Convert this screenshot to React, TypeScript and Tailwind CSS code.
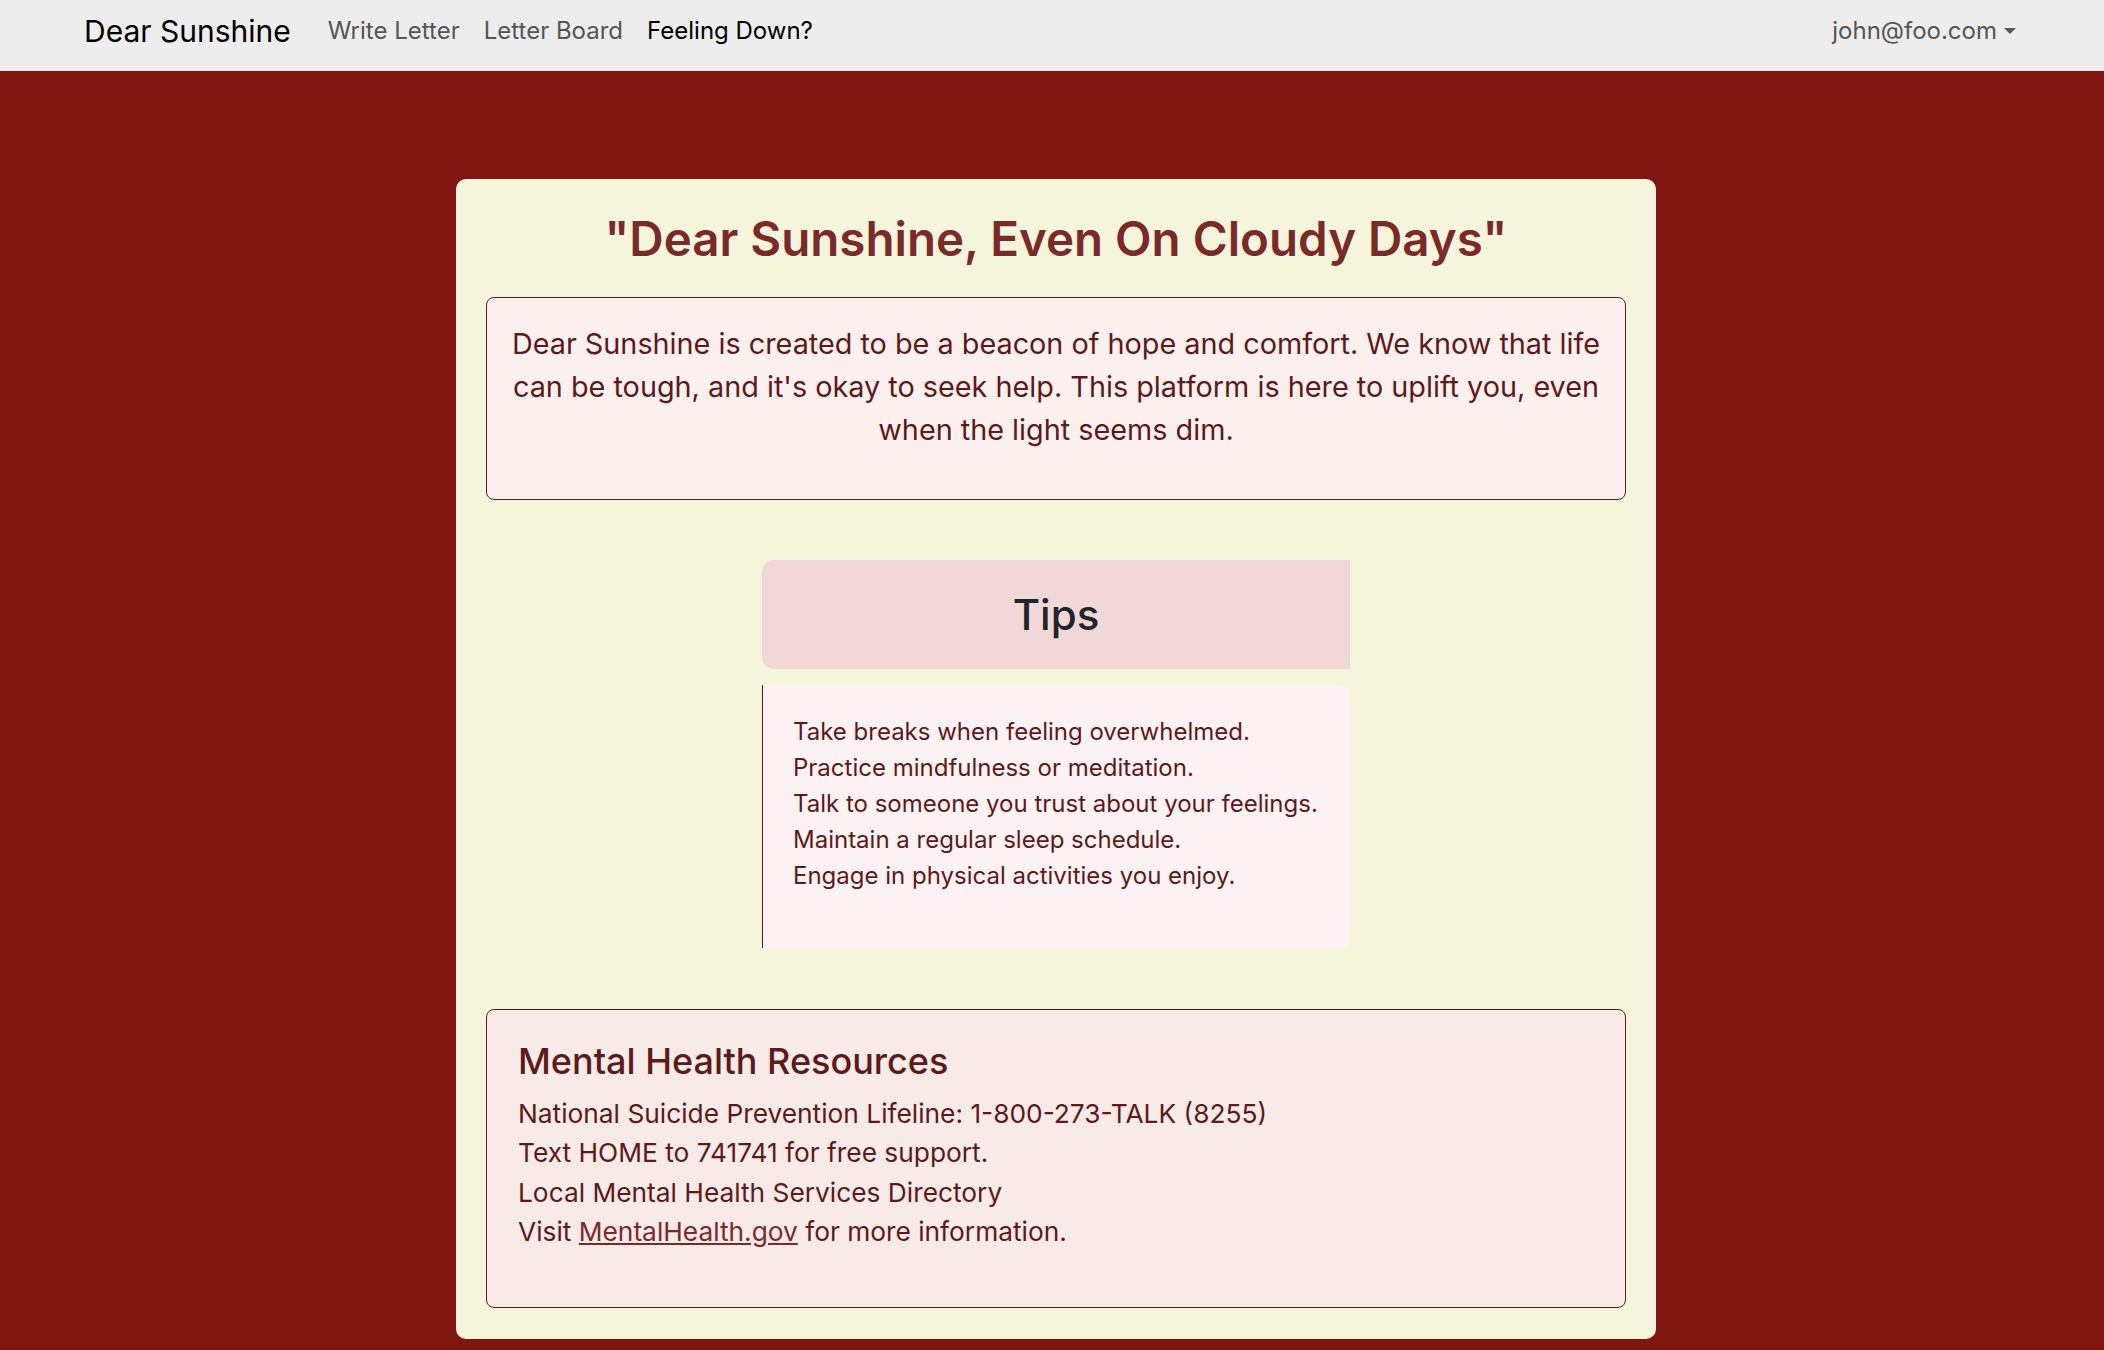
import React from "react";

export default function App() {
  const tips = [
    "Take breaks when feeling overwhelmed.",
    "Practice mindfulness or meditation.",
    "Talk to someone you trust about your feelings.",
    "Maintain a regular sleep schedule.",
    "Engage in physical activities you enjoy.",
  ];
  return (
    <div
      className="min-h-screen bg-[#7f1710]"
      style={{ fontFamily: "Inter, 'Noto Sans', sans-serif" }}
    >
      <nav className="h-[71px] bg-[#ededed] flex items-center justify-between px-[84px] pb-[10px]">
        <div className="flex items-center">
          <span className="text-[30px] text-black mr-[37px] leading-none">Dear Sunshine</span>
          <div className="flex items-center gap-[24px] text-[24px] leading-none">
            <span className="text-[#555555]">Write Letter</span>
            <span className="text-[#555555]">Letter Board</span>
            <span className="text-black">Feeling Down?</span>
          </div>
        </div>
        <div className="flex items-center text-[24px] text-[#555555] leading-none mr-[4px]">
          <span>john@foo.com</span>
          <span className="ml-[7px] w-0 h-0 border-l-[6px] border-r-[6px] border-t-[6px] border-l-transparent border-r-transparent border-t-[#555555]"></span>
        </div>
      </nav>

      <main className="flex justify-center pt-[108px] pb-[12px] pl-[8px]">
        <div className="w-[1200px] bg-[#f5f5dc] rounded-[10px] px-[30px] pt-[31px] pb-[31px]">
          <h1 className="text-center text-[47.5px] leading-[1.2] font-semibold text-[#7b2a2a] mb-[30px]">
            "Dear Sunshine, Even On Cloudy Days"
          </h1>

          <div className="border border-[#5c1a1a] rounded-[8px] bg-[#fcf0ee] px-[20px] pt-[24px] pb-[48px]">
            <p className="text-center text-[28.8px] leading-[43px] text-[#5c1a1a]">
              Dear Sunshine is created to be a beacon of hope and comfort. We know that life can be tough, and it's okay to seek help. This platform is here to uplift you, even when the light seems dim.
            </p>
          </div>

          <div className="w-[588px] mx-auto mt-[60px]">
            <div className="h-[109px] bg-[#f2d7d9] rounded-l-[12px] flex items-center justify-center">
              <h2 className="text-[42px] font-medium text-[#212529] leading-none">Tips</h2>
            </div>
            <div className="mt-[16px] h-[263px] bg-[#fdf2f3] border-l border-[#5c1a1a] rounded-r-[10px] pl-[30px] pt-[29px]">
              {tips.map((t) => (
                <div key={t} className="text-[24px] leading-[36px] text-[#5c1a1a]">
                  {t}
                </div>
              ))}
            </div>
          </div>

          <div className="mt-[61px] border border-[#5c1a1a] rounded-[8px] bg-[#f8eae7] h-[299px] px-[31px] pt-[30px]">
            <h3 className="text-[36px] font-medium text-[#5c1a1a] leading-[1.2] mb-[11px]">
              Mental Health Resources
            </h3>
            <div className="text-[26.3px] leading-[39.2px] text-[#5c1a1a]">
              <div>National Suicide Prevention Lifeline: 1-800-273-TALK (8255)</div>
              <div>Text HOME to 741741 for free support.</div>
              <div>Local Mental Health Services Directory</div>
              <div>
                Visit <span className="underline text-[#7b2a2a]">MentalHealth.gov</span> for more information.
              </div>
            </div>
          </div>
        </div>
      </main>
    </div>
  );
}
